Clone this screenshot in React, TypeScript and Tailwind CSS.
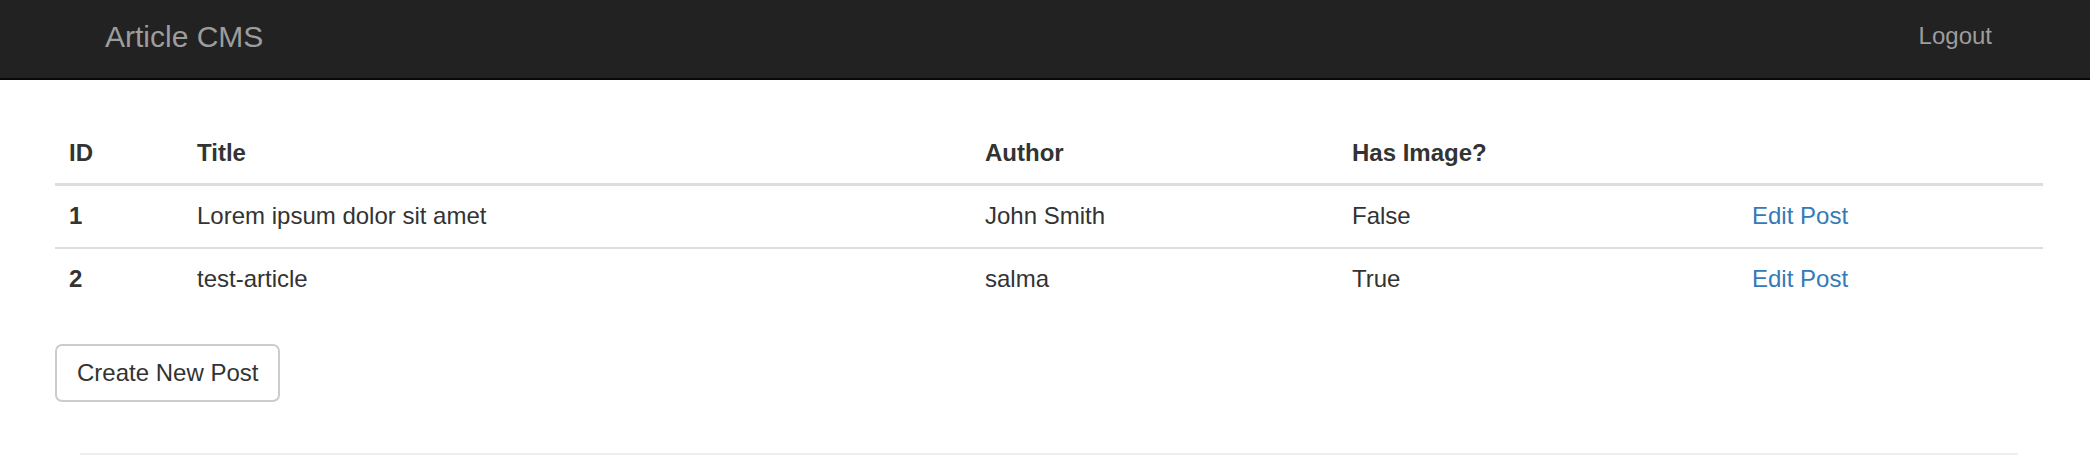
const posts = [
  { id: 1, title: 'Lorem ipsum dolor sit amet', author: 'John Smith', hasImage: 'False' },
  { id: 2, title: 'test-article', author: 'salma', hasImage: 'True' },
];

function Navbar() {
  return (
    <nav className="flex h-[80px] items-start justify-between border-b-2 border-[#080808] bg-[#222222]">
      <a href="#" className="pl-[105px] pt-[22px] text-[30px] leading-[30px] text-[#9d9d9d]">
        Article CMS
      </a>
      <a href="#" className="pr-[98px] pt-[24px] text-[24px] leading-[24px] text-[#9d9d9d]">
        Logout
      </a>
    </nav>
  );
}

export default function App() {
  return (
    <div
      className="min-h-screen bg-white text-[24px] leading-[34px] text-[#333333]"
      style={{ fontFamily: '"Liberation Sans", Arial, sans-serif' }}
    >
      <Navbar />

      <div className="pl-[55px] pt-[43px]">
        <table className="w-[1988px] table-fixed border-collapse text-left">
          <colgroup>
            <col className="w-[128px]" />
            <col className="w-[788px]" />
            <col className="w-[367px]" />
            <col className="w-[400px]" />
            <col className="w-[305px]" />
          </colgroup>
          <thead>
            <tr className="border-b-[3px] border-[#dddddd]">
              <th className="px-[14px] pt-[13px] pb-[13px] font-bold">ID</th>
              <th className="px-[14px] pt-[13px] pb-[13px] font-bold">Title</th>
              <th className="px-[14px] pt-[13px] pb-[13px] font-bold">Author</th>
              <th className="px-[14px] pt-[13px] pb-[13px] font-bold">Has Image?</th>
              <th className="px-[14px] pt-[13px] pb-[13px]"></th>
            </tr>
          </thead>
          <tbody>
            {posts.map((post, i) => (
              <tr key={post.id} className={i > 0 ? 'border-t-2 border-[#dddddd]' : ''}>
                <td className="px-[14px] pt-[13px] pb-[14px] font-bold">{post.id}</td>
                <td className="px-[14px] pt-[13px] pb-[14px]">{post.title}</td>
                <td className="px-[14px] pt-[13px] pb-[14px]">{post.author}</td>
                <td className="px-[14px] pt-[13px] pb-[14px]">{post.hasImage}</td>
                <td className="px-[14px] pt-[13px] pb-[14px]">
                  <a href="#" className="text-[#337ab7]">
                    Edit Post
                  </a>
                </td>
              </tr>
            ))}
          </tbody>
        </table>

        <button className="mt-[34px] rounded-[7px] border-2 border-[#cccccc] bg-white px-[20px] py-[10px] text-[24px] leading-[34px] text-[#333333]">
          Create New Post
        </button>
      </div>

      <hr className="ml-[80px] mt-[51px] w-[1938px] border-t-2 border-[#eeeeee]" />
    </div>
  );
}
